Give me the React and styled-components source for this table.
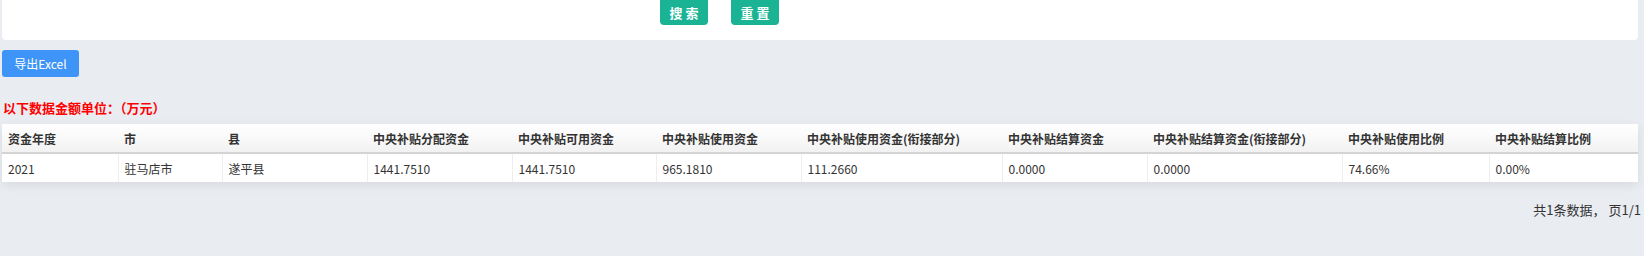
import { styled, createGlobalStyle } from 'styled-components';

const GlobalStyle = createGlobalStyle`
  html, body {
    margin: 0;
    padding: 0;
    background: #e9ecf1;
    font-family: "Noto Sans CJK SC", "Noto Sans", sans-serif;
    font-size: 12px;
    color: #333;
  }
`;

const Page = styled.div`
  padding: 0 6px 0 2px;
  display: flex;
  flex-direction: column;
`;

const SearchPanel = styled.div`
  height: 40px;
  background: #fff;
  border-radius: 0 0 4px 4px;
  display: flex;
  align-items: flex-start;
  padding-left: 658px;
  gap: 23px;
`;

const TealButton = styled.button`
  width: 48px;
  height: 25px;
  border: none;
  border-radius: 0 0 4px 4px;
  background: #1ab394;
  color: #fff;
  font-family: inherit;
  font-size: 13px;
  font-weight: bold;
  letter-spacing: 3px;
  padding: 0 0 0 3px;
  line-height: 22px;
`;

const Toolbar = styled.div`
  margin-top: 10px;
  display: flex;
`;

const ExportButton = styled.button`
  width: 77px;
  height: 27px;
  border: none;
  border-radius: 3px;
  background: #3e95f7;
  color: #fff;
  font-family: inherit;
  font-size: 12px;
  padding: 0;
`;

const UnitNote = styled.div`
  margin-top: 23px;
  color: #f00;
  font-size: 13px;
  font-weight: bold;
  line-height: 16px;
  padding-left: 1px;
`;

const Table = styled.table`
  margin-top: 8px;
  width: 100%;
  border-collapse: collapse;
  table-layout: fixed;
  background: #fff;
  box-shadow: 0 3px 10px rgba(0, 0, 0, 0.08);
`;

const HeadCell = styled.th`
  height: 28px;
  padding: 0 6px;
  text-align: left;
  font-weight: bold;
  font-size: 12px;
  color: #333;
  background: linear-gradient(#fff, #f2f2f2);
  border-bottom: 2px solid #d4d4d4;
  white-space: nowrap;
`;

const BodyCell = styled.td`
  height: 28px;
  padding: 0 6px;
  font-size: 12px;
  color: #333;
  border-left: 1px solid #eee;
  &:first-child {
    border-left: none;
  }
`;

const Pager = styled.div`
  margin-top: 18px;
  text-align: right;
  font-size: 13px;
  color: #333;
  margin-right: -3px;
`;

const columns = [
  { title: '资金年度', width: 116 },
  { title: '市', width: 104 },
  { title: '县', width: 145 },
  { title: '中央补贴分配资金', width: 145 },
  { title: '中央补贴可用资金', width: 144 },
  { title: '中央补贴使用资金', width: 145 },
  { title: '中央补贴使用资金(衔接部分)', width: 201 },
  { title: '中央补贴结算资金', width: 145 },
  { title: '中央补贴结算资金(衔接部分)', width: 195 },
  { title: '中央补贴使用比例', width: 147 },
  { title: '中央补贴结算比例', width: 149 },
];

const rows = [
  ['2021', '驻马店市', '遂平县', '1441.7510', '1441.7510', '965.1810', '111.2660', '0.0000', '0.0000', '74.66%', '0.00%'],
];

export default function App() {
  return (
    <>
      <GlobalStyle />
      <Page>
        <SearchPanel>
          <TealButton>搜索</TealButton>
          <TealButton>重置</TealButton>
        </SearchPanel>
        <Toolbar>
          <ExportButton>导出Excel</ExportButton>
        </Toolbar>
        <UnitNote>以下数据金额单位：（万元）</UnitNote>
        <Table>
          <colgroup>
            {columns.map((c) => (
              <col key={c.title} style={{ width: c.width }} />
            ))}
          </colgroup>
          <thead>
            <tr>
              {columns.map((c) => (
                <HeadCell key={c.title}>{c.title}</HeadCell>
              ))}
            </tr>
          </thead>
          <tbody>
            {rows.map((r, i) => (
              <tr key={i}>
                {r.map((v, j) => (
                  <BodyCell key={j}>{v}</BodyCell>
                ))}
              </tr>
            ))}
          </tbody>
        </Table>
        <Pager>共1条数据， 页1/1</Pager>
      </Page>
    </>
  );
}
